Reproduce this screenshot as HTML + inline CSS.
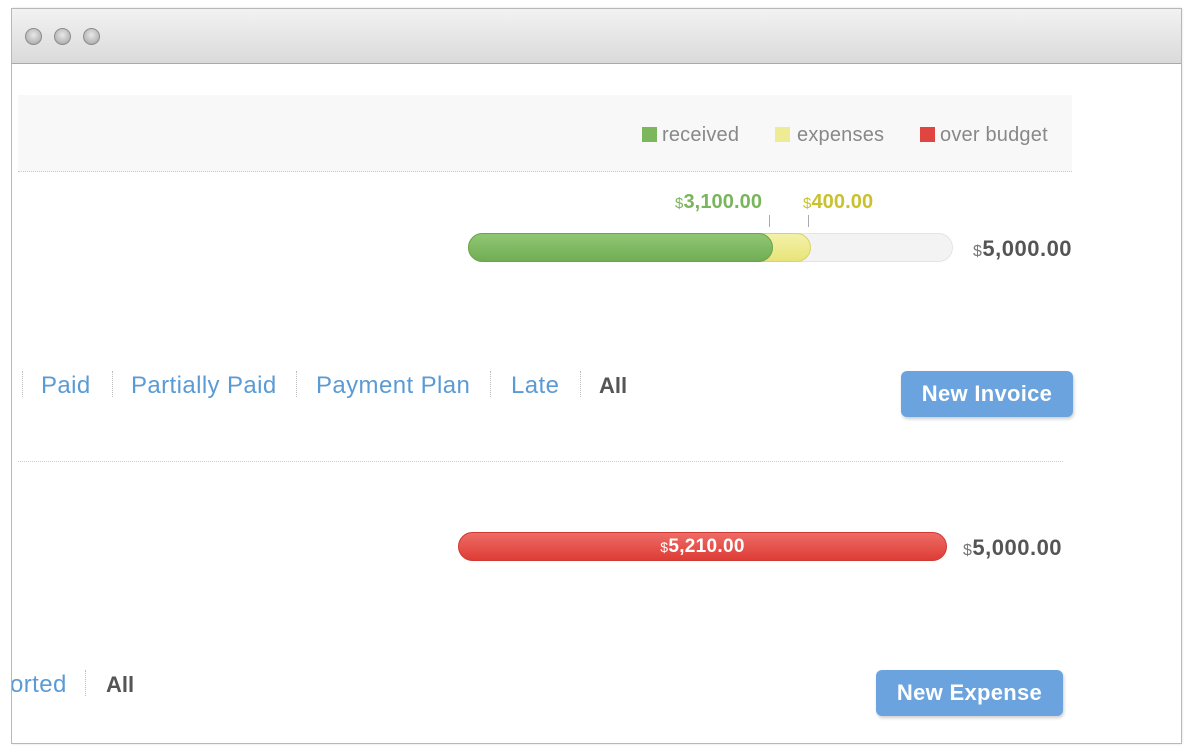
<!DOCTYPE html>
<html><head><style>
*{margin:0;padding:0;box-sizing:border-box}
body{width:1200px;height:753px;background:#fff;position:relative;overflow:hidden;font-family:"Liberation Sans",sans-serif}
.a{position:absolute;white-space:nowrap}
.win{position:absolute;left:11px;top:8px;width:1171px;height:736px;border:1px solid #b8b8b8;background:#fff;overflow:hidden;box-shadow:0 0 2px rgba(0,0,0,.15)}
.tb{position:absolute;left:0;top:0;right:0;height:55px;background:linear-gradient(#f2f2f2,#dadada);border-bottom:1px solid #a9a9a9}
.dot{position:absolute;top:19px;width:17px;height:17px;border-radius:50%;background:radial-gradient(circle at 50% 40%,#e8e8e8,#bdbdbd 60%,#9a9a9a);border:1px solid #8d8d8d}
.sq{position:absolute;width:15px;height:15px}
.lg{position:absolute;font-size:20px;letter-spacing:0.2px;color:#888;top:124px}
.tab{position:absolute;top:372px;font-size:24px;letter-spacing:0.4px;color:#5b9bd5}
.dv{position:absolute;top:371px;height:26px;border-left:1px dotted #bbb}
.btn{position:absolute;background:#6aa3dd;border-radius:6px;color:#fff;font-weight:bold;font-size:22px;letter-spacing:0.3px;text-align:center;box-shadow:1px 2px 3px rgba(0,0,0,.2)}
.amt{position:absolute;font-size:22px;letter-spacing:0.5px;font-weight:bold;color:#555}
.amt small{font-size:16px;font-weight:normal;color:#777}
</style></head><body>
<div class="win">
<div class="tb"><div class="dot" style="left:13px"></div><div class="dot" style="left:42px"></div><div class="dot" style="left:71px"></div></div>
</div>
<div class="a" style="left:18px;top:95px;width:1054px;height:77px;background:#f8f8f8;border-bottom:1px dotted #ccc"></div>
<div class="sq" style="left:642px;top:127px;background:#7cb65d"></div><div class="lg" style="left:662px">received</div>
<div class="sq" style="left:775px;top:127px;background:#eeeb95"></div><div class="lg" style="left:797px">expenses</div>
<div class="sq" style="left:920px;top:127px;background:#e04540"></div><div class="lg" style="left:940px">over budget</div>

<div class="a" style="left:675px;top:191px;font-size:20px;letter-spacing:0.1px;font-weight:bold;color:#7ab55c"><span style="font-size:15px;font-weight:normal">$</span>3,100.00</div>
<div class="a" style="left:803px;top:191px;font-size:20px;letter-spacing:0.1px;font-weight:bold;color:#c9c22e"><span style="font-size:15px;font-weight:normal">$</span>400.00</div>
<div class="a" style="left:769px;top:215px;width:1px;height:12px;background:#aaa"></div>
<div class="a" style="left:808px;top:215px;width:1px;height:12px;background:#aaa"></div>
<div class="a" style="left:468px;top:233px;width:485px;height:29px;border-radius:15px;background:#f3f3f3;border:1px solid #e4e4e4"></div>
<div class="a" style="left:468px;top:233px;width:343px;height:29px;border-radius:15px;background:linear-gradient(#f3f1a8,#e8e47a);border:1px solid #d8d36a"></div>
<div class="a" style="left:468px;top:233px;width:305px;height:29px;border-radius:15px;background:linear-gradient(#8fc672,#72ad55);border:1px solid #6aa34e"></div>
<div class="amt" style="left:973px;top:236px"><small>$</small>5,000.00</div>

<div class="dv" style="left:22px"></div>
<div class="tab" style="left:41px">Paid</div>
<div class="dv" style="left:112px"></div>
<div class="tab" style="left:131px">Partially Paid</div>
<div class="dv" style="left:296px"></div>
<div class="tab" style="left:316px">Payment Plan</div>
<div class="dv" style="left:490px"></div>
<div class="tab" style="left:511px">Late</div>
<div class="dv" style="left:580px"></div>
<div class="tab" style="left:599px;color:#555;font-weight:bold;font-size:22px;letter-spacing:0;top:373px">All</div>
<div class="btn" style="left:901px;top:371px;width:172px;height:46px;line-height:46px">New Invoice</div>

<div class="a" style="left:18px;top:461px;width:1045px;border-top:1px dotted #ccc"></div>
<div class="a" style="left:458px;top:532px;width:489px;height:29px;border-radius:15px;background:linear-gradient(#ee6b65,#dd3d36);border:1px solid #cf3a34;color:#fff;font-weight:bold;font-size:19px;letter-spacing:0.3px;text-align:center;line-height:28px"><span style="font-size:14px;font-weight:normal">$</span>5,210.00</div>
<div class="amt" style="left:963px;top:535px"><small>$</small>5,000.00</div>

<div class="tab" style="left:10px;top:671px">orted</div>
<div class="dv" style="left:85px;top:670px"></div>
<div class="tab" style="left:106px;top:672px;color:#555;font-weight:bold;font-size:22px;letter-spacing:0">All</div>
<div class="btn" style="left:876px;top:670px;width:187px;height:46px;line-height:46px">New Expense</div>
<div class="a" style="left:0;top:0;width:12px;height:753px;background:#fff"></div>
<div class="a" style="left:11px;top:8px;width:1px;height:736px;background:#b8b8b8"></div>
</body></html>
